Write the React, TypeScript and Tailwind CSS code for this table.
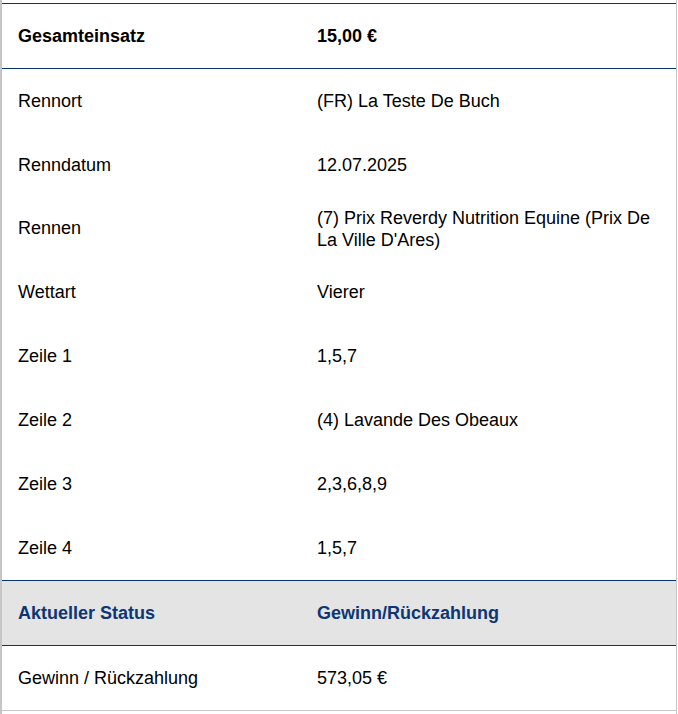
import React from "react";

const rows: [string, string][] = [
    ["Rennort", "(FR) La Teste De Buch"],
    ["Renndatum", "12.07.2025"],
    ["Rennen", "(7) Prix Reverdy Nutrition Equine (Prix De La Ville D'Ares)"],
    ["Wettart", "Vierer"],
    ["Zeile 1", "1,5,7"],
    ["Zeile 2", "(4) Lavande Des Obeaux"],
    ["Zeile 3", "2,3,6,8,9"],
    ["Zeile 4", "1,5,7"],
];

const Row = ({ label, value, className = "" }: { label: string; value: string; className?: string }) => (
    <div className={`flex items-center ${className}`}>
        <div className="w-[299px] shrink-0 px-4">{label}</div>
        <div className="flex-1 px-4 leading-[22px]">{value}</div>
    </div>
);

export default function App() {
    return (
        <div className="w-[678px] h-[714px] bg-white text-[18px] text-black font-['Liberation_Sans',Arial,sans-serif]">
            <div className="w-[677px] h-[714px] border-l-[2px] border-r border-[#c6c6c6] pt-[3px]">
                <div className="border-t border-[#0a3470]">
                    <Row label="Gesamteinsatz" value="15,00 €" className="h-[65px] font-bold border-b border-[#0a3470]" />
                    {rows.map(([l, v]) => (
                        <Row key={l} label={l} value={v} className={l === "Rennen" ? "h-[63px]" : "h-16"} />
                    ))}
                    <Row
                        label="Aktueller Status"
                        value="Gewinn/Rückzahlung"
                        className="h-[66px] font-bold text-[#0c3774] bg-[#e4e4e4] border-y border-[#0a3470]"
                    />
                    <Row label="Gewinn / Rückzahlung" value="573,05 €" className="h-[65px] border-b border-[#c6c6c6]" />
                </div>
            </div>
        </div>
    );
}
